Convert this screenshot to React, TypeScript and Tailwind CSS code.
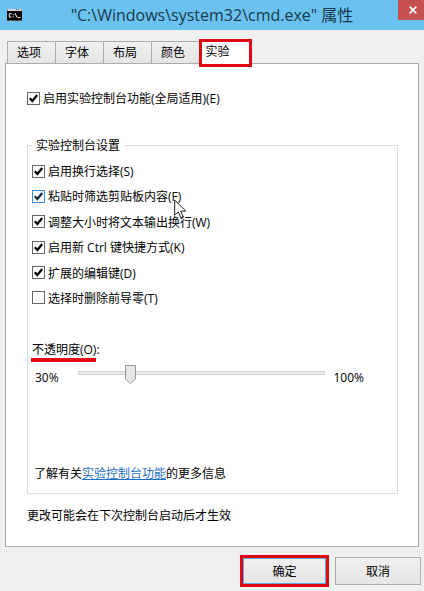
import { useState } from 'react';
import type { ReactNode } from 'react';

interface CheckOptionProps {
  label: string;
  initial?: boolean;
  highlighted?: boolean;
  children?: ReactNode;
}

const tabs = ['选项', '字体', '布局', '颜色'];

function ConsoleIcon() {
  return (
    <svg width="15" height="12" viewBox="0 0 15 12" aria-hidden="true">
      <rect width="15" height="12" fill="#9a9a9a" />
      <rect x="1" y="0" width="13" height="2" fill="#d8d8d8" />
      <rect x="9" y="0" width="1" height="1" fill="#555" />
      <rect x="11" y="0" width="1" height="1" fill="#555" />
      <rect x="0" y="2" width="15" height="9.5" fill="#000" />
      <path d="M4.5 4.7H2.3v3.4h2.2M6.2 5v1M6.2 7.3v1M8 4.2l2 4.2M10.6 8.5h2.6" stroke="#fff" fill="none" />
    </svg>
  );
}

function CheckOption({ label, initial = false, highlighted = false, children }: CheckOptionProps) {
  const [checked, setChecked] = useState(initial);

  return (
    <label className="relative flex h-[18px] w-fit items-center gap-[3px]">
      <span className="grid place-items-center">
        <input
          type="checkbox"
          checked={checked}
          onChange={event => setChecked(event.target.checked)}
          className={`col-start-1 row-start-1 h-[13px] w-[13px] appearance-none border bg-white ${highlighted ? 'border-[#3b8ee0]' : 'border-[#666]'}`}
        />
        {checked && (
          <svg className="pointer-events-none col-start-1 row-start-1" width="13" height="13" viewBox="0 0 13 13" aria-hidden="true">
            <path d="M2.8 6.2l2.6 2.8 4.8-6" stroke={highlighted ? '#0d2747' : '#000'} strokeWidth="2.2" fill="none" />
          </svg>
        )}
      </span>
      <span className="pt-[2px] whitespace-nowrap">{label}</span>
      {children}
    </label>
  );
}

function MousePointer() {
  return (
    <svg className="pointer-events-none absolute top-3 right-[-6px]" width="13" height="20" viewBox="0 0 13 20" aria-hidden="true">
      <path d="M.7 1v15.2l3.6-3.3 2.5 6 2.4-1-2.5-5.8h5.2z" fill="#fff" stroke="#222" />
    </svg>
  );
}

function OpacitySlider() {
  const [opacity, setOpacity] = useState(44);
  const position = (opacity - 30) / 70;

  return (
    <div className="relative mr-2 ml-[19px] h-[20px] flex-1">
      <input
        id="opacity"
        type="range"
        min={30}
        max={100}
        value={opacity}
        onChange={event => setOpacity(Number(event.target.value))}
        className="block h-[18px] w-full appearance-none bg-transparent [&::-webkit-slider-runnable-track]:h-1 [&::-webkit-slider-runnable-track]:border [&::-webkit-slider-runnable-track]:border-[#d3d3d3] [&::-webkit-slider-runnable-track]:bg-[#e7eaea] [&::-webkit-slider-thumb]:h-[2px] [&::-webkit-slider-thumb]:w-[11px] [&::-webkit-slider-thumb]:appearance-none [&::-webkit-slider-thumb]:opacity-0"
      />
      <svg
        className="pointer-events-none absolute top-px"
        style={{ left: `calc((100% - 11px) * ${position})` }}
        width="11"
        height="20"
        viewBox="0 0 11 20"
        aria-hidden="true"
      >
        <path d="M.5.5h10v13.5l-5 4.5-5-4.5z" fill="#e6e6e6" stroke="#9b9b9b" />
      </svg>
    </div>
  );
}

export default function App() {
  return (
    <div className="min-h-screen bg-[#f0f0f0] font-['Open_Sans','Noto_Sans_CJK_SC',sans-serif] text-[12px] leading-[18px] text-black">
      <header className="relative flex h-[30px] items-center bg-[#6bc2f0] pl-[7px]">
        <ConsoleIcon />
        <h1 className="flex-1 pr-[22px] text-center text-[16px] leading-5 whitespace-nowrap text-[#173a4c]">
          "C:\Windows\system32\cmd.exe" 属性
        </h1>
        <button aria-label="关闭" className="absolute top-0 right-0 flex h-5 w-[26px] items-center justify-center bg-[#c75050] pl-1">
          <svg width="8" height="8" viewBox="0 0 8 8" aria-hidden="true">
            <path d="M.7.7l6.6 6.6M7.3.7L.7 7.3" stroke="#fff" strokeWidth="1.7" />
          </svg>
        </button>
      </header>

      <main className="pr-[5px] pl-[5px]">
        <div role="tablist" className="flex h-[33px] items-end pl-[2px]">
          {tabs.map(tab => (
            <button
              key={tab}
              role="tab"
              aria-selected={false}
              className="h-[22px] w-12 border border-b-0 border-l-[#acacac] border-t-[#acacac] border-r-transparent bg-linear-to-b from-[#f0f0f0] to-[#e5e5e5] pt-px pr-1"
            >
              {tab}
            </button>
          ))}
          <button role="tab" aria-selected={true} className="relative z-10 mb-[-4px] h-7 w-[53px] border-[3px] border-[#df0b12] bg-white pr-4 pb-[2px]">
            实验
          </button>
        </div>

        <section role="tabpanel" className="border border-[#acacac] bg-white pt-[25px] pr-5 pb-[21px] pl-[21px]">
          <CheckOption label="启用实验控制台功能(全局适用)(E)" initial />

          <fieldset className="mt-[28px] border border-[#dcdcdc] pr-[5px] pb-[10px] pl-1">
            <legend className="px-1 pt-[2px]">实验控制台设置</legend>

            <div className="flex h-[152px] flex-col justify-between pt-[7px]">
              <CheckOption label="启用换行选择(S)" initial />
              <CheckOption label="粘贴时筛选剪贴板内容(F)" initial highlighted>
                <MousePointer />
              </CheckOption>
              <CheckOption label="调整大小时将文本输出换行(W)" initial />
              <CheckOption label="启用新 Ctrl 键快捷方式(K)" initial />
              <CheckOption label="扩展的编辑键(D)" initial />
              <CheckOption label="选择时删除前导零(T)" />
            </div>

            <label htmlFor="opacity" className="relative mt-[34px] block w-fit">
              不透明度(O):
              <span className="absolute right-1 bottom-[-3px] left-[-1px] h-1 bg-[#df0b12]" />
            </label>
            <div className="mt-[5px] flex h-[23px] items-start pr-[28px] pl-[3px]">
              <span className="mt-[5px]">30%</span>
              <OpacitySlider />
              <span className="mt-[5px]">100%</span>
            </div>

            <p className="mt-[78px] pl-[2px]">
              了解有关<a href="#console" className="text-[#1a6fc4] underline">实验控制台功能</a>的更多信息
            </p>
          </fieldset>

          <p className="mt-[13px]">更改可能会在下次控制台启动后才生效</p>
        </section>
      </main>

      <footer className="mt-2 flex items-center justify-end gap-[6px] pr-[3px]">
        <div className="border-[3px] border-[#df0b12]">
          <button className="block h-[26px] w-[83px] border border-[#5aa7e8] bg-linear-to-b from-[#f0f0f0] to-[#e5e5e5] pt-[2px]">确定</button>
        </div>
        <button className="h-7 w-[86px] border border-[#acacac] bg-linear-to-b from-[#f0f0f0] to-[#e5e5e5] pt-[2px]">取消</button>
      </footer>
    </div>
  );
}
